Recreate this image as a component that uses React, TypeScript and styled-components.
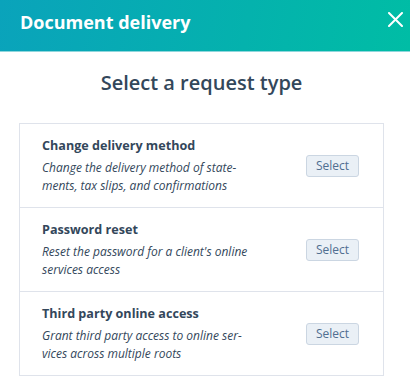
import styled, { createGlobalStyle } from "styled-components";

const GlobalStyle = createGlobalStyle`
  html, body {
    margin: 0;
    padding: 0;
    background: #ffffff;
  }
  body {
    font-family: "Open Sans", "Liberation Sans", sans-serif;
    color: #33475b;
  }
`;

const Modal = styled.div`
  width: 410px;
  height: 389px;
  background: #ffffff;
  overflow: hidden;
`;

const Header = styled.div`
  height: 52px;
  box-sizing: border-box;
  display: flex;
  align-items: center;
  justify-content: space-between;
  padding: 0 7px 8px 20px;
  background: linear-gradient(100deg, #0aa3bb 0%, #04b2ad 60%, #00bda5 100%);
  border-bottom: 1px solid #8fd6dc;
`;

const HeaderTitle = styled.h1`
  margin: 0;
  font-size: 18px;
  font-weight: 700;
  line-height: 22px;
  color: #ffffff;
`;

const CloseButton = styled.button`
  border: 0;
  padding: 0;
  background: transparent;
  width: 15px;
  height: 15px;
  display: flex;
  cursor: pointer;
  margin-top: -4px;
`;

const Body = styled.div`
  padding: 17px 26px 0 19px;
`;

const Heading = styled.h2`
  margin: 0 0 26px;
  text-align: center;
  font-size: 20px;
  font-weight: 600;
  line-height: 28px;
  color: #33475b;
`;

const Card = styled.div`
  border: 1px solid #dfe3eb;
  display: flex;
  flex-direction: column;
`;

const Row = styled.div`
  height: 84px;
  box-sizing: border-box;
  display: flex;
  align-items: center;
  justify-content: space-between;
  padding: 0 24px 0 22px;
  border-top: 1px solid #dfe3eb;
  &:first-child {
    border-top: 0;
    height: 83px;
  }
`;

const Info = styled.div`
  display: flex;
  flex-direction: column;
  gap: 4px;
`;

const RowTitle = styled.div`
  font-size: 12.6px;
  font-weight: 700;
  line-height: 18px;
  color: #33475b;
`;

const RowText = styled.div`
  font-size: 12px;
  font-style: italic;
  line-height: 18px;
  color: #33475b;
`;

const SelectButton = styled.button`
  width: 53px;
  height: 22px;
  box-sizing: border-box;
  padding: 0;
  font-family: inherit;
  font-size: 12px;
  color: #506e91;
  background: #eaf0f6;
  border: 1px solid #cbd6e2;
  border-radius: 3px;
  cursor: pointer;
`;

const requests = [
  {
    title: "Change delivery method",
    lines: ["Change the delivery method of state-", "ments, tax slips, and confirmations"],
  },
  {
    title: "Password reset",
    lines: ["Reset the password for a client's online", "services access"],
  },
  {
    title: "Third party online access",
    lines: ["Grant third party access to online ser-", "vices across multiple roots"],
  },
];

const App = () => {
  return (
    <Modal>
      <GlobalStyle />
      <Header>
        <HeaderTitle>Document delivery</HeaderTitle>
        <CloseButton aria-label="Close">
          <svg width="15" height="15" viewBox="0 0 15 15">
            <path d="M1 1 L14 14 M14 1 L1 14" stroke="#ffffff" strokeWidth="2" strokeLinecap="round" />
          </svg>
        </CloseButton>
      </Header>
      <Body>
        <Heading>Select a request type</Heading>
        <Card>
          {requests.map((r) => (
            <Row key={r.title}>
              <Info>
                <RowTitle>{r.title}</RowTitle>
                <RowText>
                  {r.lines[0]}
                  <br />
                  {r.lines[1]}
                </RowText>
              </Info>
              <SelectButton>Select</SelectButton>
            </Row>
          ))}
        </Card>
      </Body>
    </Modal>
  );
};

export default App;
